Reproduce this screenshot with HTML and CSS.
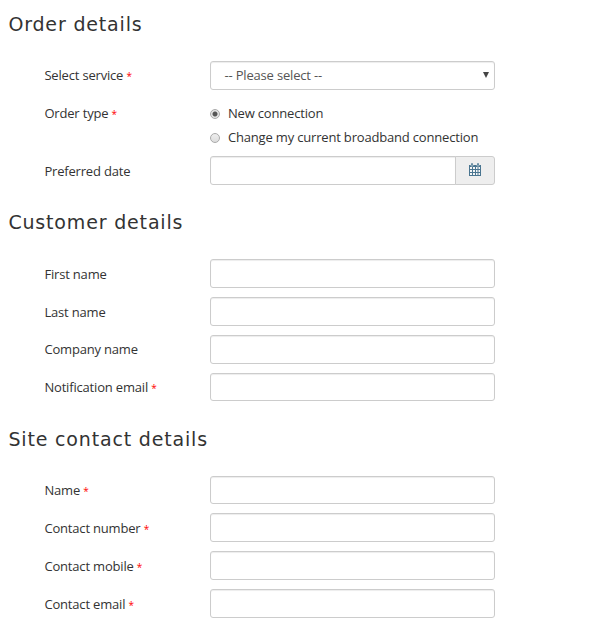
FILE: index.html
```
<!DOCTYPE html>
<html lang="en">
<head>
  <meta charset="UTF-8" />
  <meta name="viewport" content="width=device-width, initial-scale=1.0"/>
  <title>Order details</title>
  <link rel="stylesheet" href="styles.css">
</head>
<body>
  <form>
    <h2>Order details</h2>
    <div class="fields">
      <div class="row">
        <label for="service">Select service <span class="req">*</span></label>
        <div class="select-wrap">
          <select class="control" id="service">
            <option>-- Please select --</option>
          </select>
          <svg class="arrow" width="6" height="6" viewBox="0 0 6 6"><path d="M0 0h6L3 6z" fill="#444"/></svg>
        </div>
      </div>
      <div class="row">
        <span class="label">Order type <span class="req">*</span></span>
        <div class="radios">
          <label class="radio"><input type="radio" name="type" checked><span>New connection</span></label>
          <label class="radio"><input type="radio" name="type"><span>Change my current broadband connection</span></label>
        </div>
      </div>
      <div class="row">
        <label for="date">Preferred date</label>
        <div class="input-group">
          <input class="control" type="text" id="date">
          <button type="button" class="addon" aria-label="Pick a date">
            <svg width="12" height="13" viewBox="0 0 12 13">
              <path d="M0 2h12v11H0z" fill="#4a7590"/>
              <path d="M2 0h2v3H2zM8 0h2v3H8z" fill="#3f6f8c" stroke="#eee" stroke-width=".5"/>
              <path d="M1 4h2v2H1zM4 4h2v2H4zM7 4h1.5v2H7zM9.5 4H11v2H9.5zM1 7h2v2H1zM4 7h2v2H4zM7 7h1.5v2H7zM9.5 7H11v2H9.5zM1 10h2v2H1zM4 10h2v2H4zM7 10h1.5v2H7zM9.5 10H11v2H9.5z" fill="#f5f5f5"/>
            </svg>
          </button>
        </div>
      </div>
    </div>

    <h2>Customer details</h2>
    <div class="fields">
      <div class="row">
        <label for="first">First name</label>
        <input class="control" type="text" id="first">
      </div>
      <div class="row">
        <label for="last">Last name</label>
        <input class="control" type="text" id="last">
      </div>
      <div class="row">
        <label for="company">Company name</label>
        <input class="control" type="text" id="company">
      </div>
      <div class="row">
        <label for="notify">Notification email <span class="req">*</span></label>
        <input class="control" type="text" id="notify">
      </div>
    </div>

    <h2>Site contact details</h2>
    <div class="fields">
      <div class="row">
        <label for="name">Name <span class="req">*</span></label>
        <input class="control" type="text" id="name">
      </div>
      <div class="row">
        <label for="number">Contact number <span class="req">*</span></label>
        <input class="control" type="text" id="number">
      </div>
      <div class="row">
        <label for="mobile">Contact mobile <span class="req">*</span></label>
        <input class="control" type="text" id="mobile">
      </div>
      <div class="row">
        <label for="email">Contact email <span class="req">*</span></label>
        <input class="control" type="text" id="email">
      </div>
    </div>
  </form>
</body>
</html>
```
FILE: styles.css
```
* {
  margin: 0;
  padding: 0;
  box-sizing: border-box;
}
body {
  background-color: #fff;
  color: #333;
  font-family: "Open Sans", sans-serif;
  font-size: 13px;
  letter-spacing: -0.18px;
  overflow: hidden;
}
form {
  width: 495px;
  padding: 11.9px 0 0 8.4px;
}
h2 {
  font-family: "DejaVu Sans", Verdana, sans-serif;
  font-size: 19px;
  font-weight: 400;
  line-height: 24px;
  letter-spacing: 0.83px;
  margin-bottom: 25px;
}
.fields {
  display: flex;
  flex-direction: column;
  gap: 9px;
  padding-left: 36px;
  margin-bottom: 25.25px;
}
.row {
  display: grid;
  grid-template-columns: 165.6px 285px;
  line-height: 18px;
}
.row > label,
.label {
  padding-top: 5.58px;
}
.req {
  color: red;
  font-size: 10px;
}
.control {
  display: block;
  width: 100%;
  height: 28.8px;
  border: 1px solid #ccc;
  border-radius: 3px;
  background-color: #fff;
  box-shadow: inset 0 1px 1px rgba(0, 0, 0, 0.075);
  color: #555;
  font-family: inherit;
  font-size: 13px;
  letter-spacing: inherit;
}
.select-wrap {
  position: relative;
}
select.control {
  appearance: none;
  padding: 0 13.5px;
}
.arrow {
  position: absolute;
  top: 11px;
  right: 6px;
}
.radios {
  height: 48.4px;
  padding-top: 3px;
}
.radio {
  display: flex;
  align-items: center;
  height: 24px;
}
.radio span {
  margin-top: -1px;
}
.radio input {
  appearance: none;
  width: 10px;
  height: 10px;
  margin-right: 8px;
  border: 1px solid #aaa;
  border-radius: 50%;
  background: linear-gradient(#eee, #ddd);
}
.radio input:checked {
  background: radial-gradient(circle, #555 0 2px, #e4e4e4 3px);
}
.input-group {
  display: flex;
}
.input-group .control {
  flex: 1;
  border-radius: 3px 0 0 3px;
}
.addon {
  display: flex;
  align-items: center;
  justify-content: center;
  width: 40px;
  margin-left: -1px;
  padding-bottom: 2px;
  border: 1px solid #ccc;
  border-radius: 0 3px 3px 0;
  background-color: #eee;
}
```
